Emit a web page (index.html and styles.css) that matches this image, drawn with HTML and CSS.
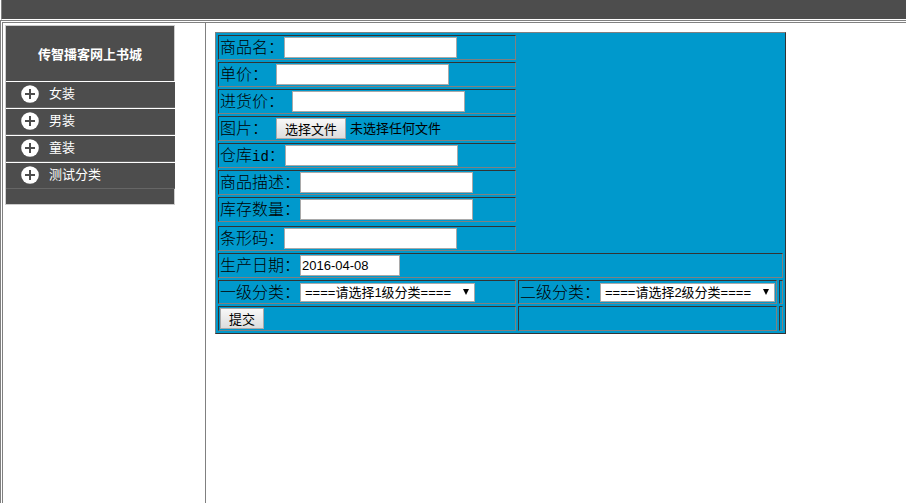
FILE: index.html
```html
<!DOCTYPE html>
<html lang="zh-CN">
<head>
<meta charset="utf-8">
<title>传智播客网上书城</title>
<link rel="stylesheet" href="styles.css">
</head>
<body>
<svg class="defs" aria-hidden="true">
  <symbol id="plus" viewBox="0 0 18 18">
    <circle cx="9" cy="9" r="8.8" fill="#fff"/>
    <path d="M9 4v10M4 9h10" stroke="#4d4d4d" stroke-width="2"/>
  </symbol>
</svg>
<header class="banner"></header>
<div class="frames">
  <nav class="side">
    <div class="menu">
      <h1 class="menu-title">传智播客网上书城</h1>
      <ul class="menu-list">
        <li><a href="#"><svg class="icon"><use href="#plus"/></svg>女装</a></li>
        <li><a href="#"><svg class="icon"><use href="#plus"/></svg>男装</a></li>
        <li><a href="#"><svg class="icon"><use href="#plus"/></svg>童装</a></li>
        <li><a href="#"><svg class="icon"><use href="#plus"/></svg>测试分类</a></li>
      </ul>
    </div>
  </nav>
  <main class="content">
    <form>
      <table class="product">
        <tr><td><div class="field"><label for="name">商品名：</label><input class="text" id="name" type="text"></div></td></tr>
        <tr><td><div class="field"><label class="spaced" for="price">单价：</label><input class="text" id="price" type="text"></div></td></tr>
        <tr><td><div class="field"><label class="spaced" for="cost">进货价：</label><input class="text" id="cost" type="text"></div></td></tr>
        <tr><td><div class="field"><label class="spaced" for="pick">图片：</label><button class="button" id="pick" type="button">选择文件</button><span class="file-name">未选择任何文件</span></div></td></tr>
        <tr><td><div class="field"><label for="store">仓库<span class="latin">id</span>：</label><input class="text" id="store" type="text"></div></td></tr>
        <tr><td><div class="field"><label for="desc">商品描述：</label><input class="text" id="desc" type="text"></div></td></tr>
        <tr><td><div class="field"><label for="stock">库存数量：</label><input class="text" id="stock" type="text"></div></td></tr>
        <tr></tr>
        <tr><td><div class="field"><label for="code">条形码：</label><input class="text" id="code" type="text"></div></td></tr>
        <tr><td colspan="3"><div class="field"><label for="date">生产日期：</label><input class="text date" id="date" type="text" value="2016-04-08"></div></td></tr>
        <tr>
          <td class="first"><div class="field short"><label for="cat1">一级分类：</label><span class="select-box"><select id="cat1"><option>====请选择1级分类====</option></select></span></div></td>
          <td class="second"><div class="field short"><label for="cat2">二级分类：</label><span class="select-box"><select id="cat2"><option>====请选择2级分类====</option></select></span></div></td>
          <td></td>
        </tr>
        <tr><td><div class="field"><button class="button submit" type="submit">提交</button></div></td><td></td><td></td></tr>
      </table>
    </form>
  </main>
</div>
</body>
</html>
```
FILE: styles.css
```css
* {
  box-sizing: border-box;
}

body {
  margin: 0;
  min-height: 100vh;
  display: flex;
  flex-direction: column;
  background: #fff;
  color: #000;
  font: 300 16px/20px "Noto Sans CJK SC", sans-serif;
}

.defs {
  display: none;
}

.banner {
  height: 20px;
  margin-left: 1px;
  border-left: 1px solid #808080;
  border-bottom: 1px solid #fff;
  background: #4d4d4d;
}

.frames {
  flex: 1;
  display: flex;
  border-top: 1px solid #808080;
  border-left: 1px solid #808080;
  padding: 1px 0 0 1px;
}

.side {
  flex: none;
  width: 204px;
  padding: 2px;
  border: 1px solid #808080;
  border-bottom: 0;
}

.menu {
  width: 170px;
  border: 1px solid #ccc;
  background: #4d4d4d;
  padding-bottom: 15px;
}

.menu-title {
  margin: 0;
  padding: 18px 0 17px;
  color: #fff;
  font-size: 13px;
  line-height: 20px;
  font-weight: 700;
  text-align: center;
}

.menu-list {
  margin: 0 -1px 0 0;
  padding: 0;
  list-style: none;
}

.menu-list li {
  border-top: 1px solid #fff;
  border-bottom: 1px solid #666;
  background: #4d4d4d;
}

.menu-list a {
  display: flex;
  align-items: flex-start;
  gap: 10px;
  height: 25px;
  padding: 1px 0 0 15px;
  color: #fff;
  font-size: 13px;
  font-weight: 400;
  text-decoration: none;
}

.icon {
  width: 18px;
  height: 18px;
  margin-top: 2px;
}

.content {
  flex: 1;
  border-top: 1px solid #808080;
  padding: 9px 8px 8px 9px;
}

.product {
  border: 1px solid;
  border-color: #808080 #333 #333 #808080;
  border-spacing: 2px;
  background: #09c;
}

.product td {
  padding: 1px;
  border: 1px solid;
  border-color: #333 #808080 #808080 #333;
}

.first {
  width: 298px;
}

.second {
  width: 259px;
}

.field {
  display: flex;
  align-items: flex-start;
  height: 21px;
}

.short {
  height: 20px;
}

.field label {
  line-height: 18px;
  white-space: nowrap;
}

.spaced {
  padding-right: 8px;
}

.latin {
  font: 14px "Liberation Mono", monospace;
}

.text {
  width: 173px;
  height: 21px;
  padding: 1px;
  border: 1px solid #a9a9a9;
  background: #fff;
  font: 13px "Liberation Sans", sans-serif;
}

.date {
  width: 100px;
}

.button {
  height: 21px;
  padding: 0 8px;
  border: 1px solid #a9a9a9;
  background: linear-gradient(#f8f8f8, #ddd);
  color: #000;
  font: 400 13px/18px "Noto Sans CJK SC", sans-serif;
}

.file-name {
  margin-left: 4px;
  font-size: 13px;
  font-weight: 400;
}

.select-box {
  position: relative;
  margin-top: 1px;
}

.select-box::after {
  content: "";
  position: absolute;
  right: 6px;
  top: 6px;
  border: 3px solid transparent;
  border-top: 6px solid #000;
  border-bottom: 0;
  pointer-events: none;
}

select {
  display: block;
  appearance: none;
  width: 175px;
  height: 19px;
  padding: 0 4px;
  border: 1px solid #a9a9a9;
  border-radius: 0;
  background: #fff;
  color: #000;
  font: 400 13px/17px "Liberation Sans", "Noto Sans CJK SC", sans-serif;
}
```
